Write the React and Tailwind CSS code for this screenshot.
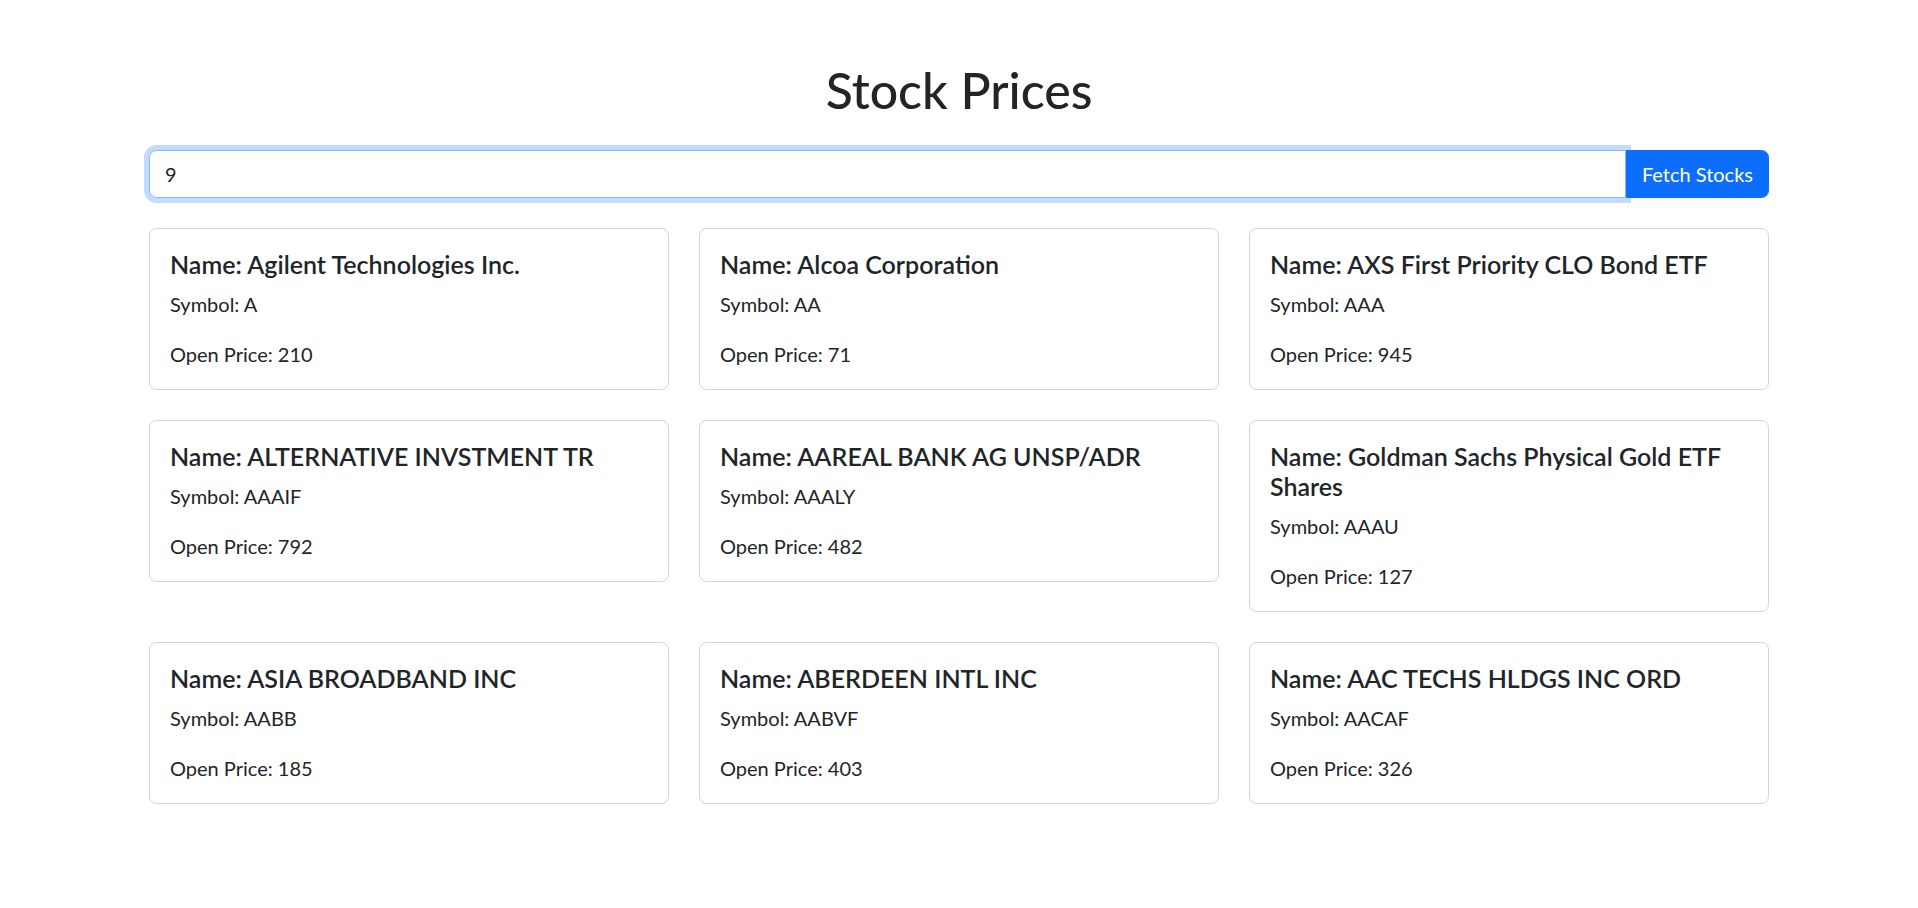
import { useState } from 'react';

const stocks = [
  { name: 'Agilent Technologies Inc.', symbol: 'A', open: 210 },
  { name: 'Alcoa Corporation', symbol: 'AA', open: 71 },
  { name: 'AXS First Priority CLO Bond ETF', symbol: 'AAA', open: 945 },
  { name: 'ALTERNATIVE INVSTMENT TR', symbol: 'AAAIF', open: 792 },
  { name: 'AAREAL BANK AG UNSP/ADR', symbol: 'AAALY', open: 482 },
  { name: 'Goldman Sachs Physical Gold ETF Shares', symbol: 'AAAU', open: 127 },
  { name: 'ASIA BROADBAND INC', symbol: 'AABB', open: 185 },
  { name: 'ABERDEEN INTL INC', symbol: 'AABVF', open: 403 },
  { name: 'AAC TECHS HLDGS INC ORD', symbol: 'AACAF', open: 326 },
];

function StockCard({ stock }) {
  return (
    <div className="rounded-[7.5px] border-[1.25px] border-[#d3d4d5] bg-white">
      <div className="p-[20px]">
        <h5 className="mb-[10px] text-[25px] font-semibold leading-[1.2] text-[#212529]">Name: {stock.name}</h5>
        <p className="mb-[20px] text-[20px] leading-[1.5] text-[#212529]">Symbol: {stock.symbol}</p>
        <p className="text-[20px] leading-[1.5] text-[#212529]">Open Price: {stock.open}</p>
      </div>
    </div>
  );
}

export default function App() {
  const [count, setCount] = useState('9');

  return (
    <div className="min-h-screen bg-white pt-[60px] font-['Lato','Liberation_Sans',sans-serif] text-[#212529]">
      <div className="mx-auto max-w-[1650px] px-[15px]">
        <h1 className="mb-[30px] text-center text-[50px] font-medium leading-[1.2]">Stock Prices</h1>

        {/* input group */}
        <div className="mb-[30px] flex">
          <input
            type="text"
            value={count}
            onChange={(e) => setCount(e.target.value)}
            className="relative z-10 h-[47.5px] flex-1 rounded-l-[7.5px] border-[1.25px] border-[#86b7fe] bg-white px-[15px] text-[20px] text-[#212529] shadow-[0_0_0_5px_rgba(13,110,253,0.25)] outline-none"
          />
          <button className="h-[47.5px] rounded-r-[7.5px] border-[1.25px] border-[#0d6efd] bg-[#0d6efd] px-[15px] text-[20px] text-white">
            Fetch Stocks
          </button>
        </div>

        <div className="grid grid-cols-3 items-start gap-x-[30px] gap-y-[30px]">
          {stocks.map((s) => (
            <StockCard key={s.symbol} stock={s} />
          ))}
        </div>
      </div>
    </div>
  );
}
